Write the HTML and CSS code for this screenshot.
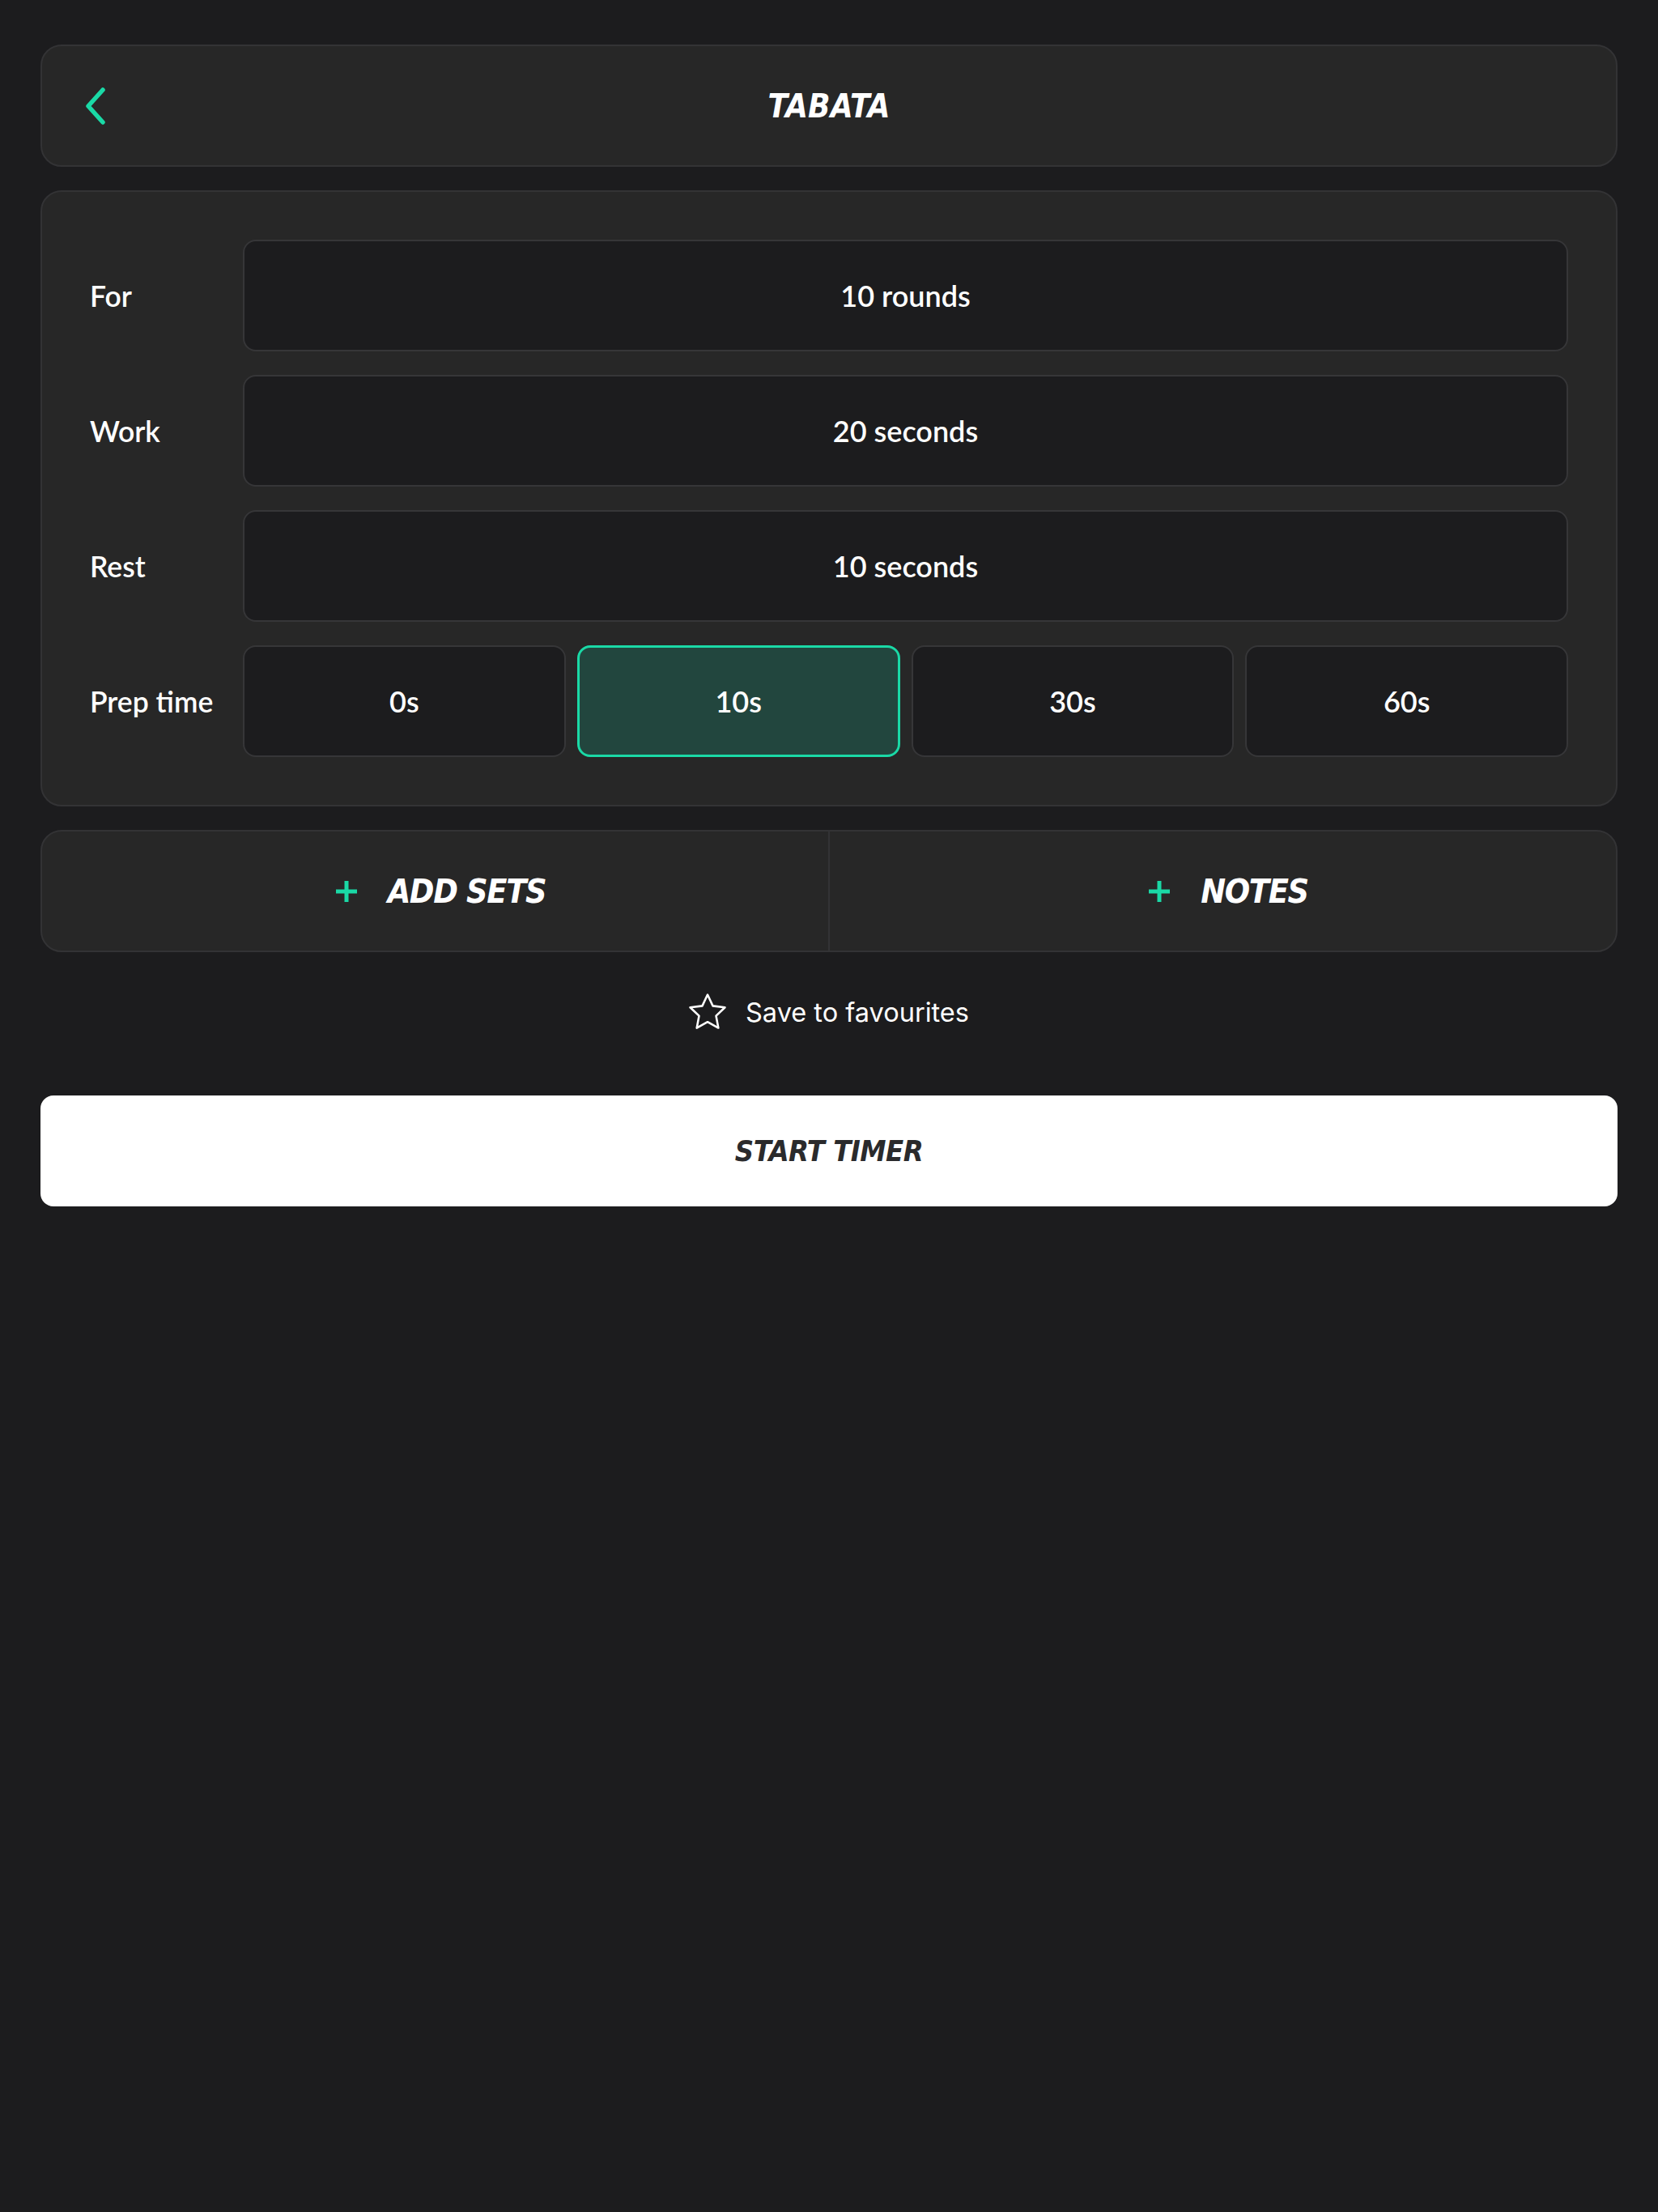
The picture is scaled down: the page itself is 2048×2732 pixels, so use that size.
FILE: index.html
```html
<!DOCTYPE html>
<html lang="en">
<head>
<meta charset="utf-8">
<title>Tabata</title>
<link rel="stylesheet" href="styles.css">
</head>
<body>
<div class="page">
  <header class="topbar">
    <div class="topbar-left">
      <svg class="back" viewBox="0 0 26 46" width="26" height="46" aria-hidden="true">
        <polyline points="22,3 4,23 22,43" fill="none" stroke="#1ad9a6" stroke-width="5.5" stroke-linecap="round" stroke-linejoin="round"/>
      </svg>
    </div>
    <h1 class="title">TABATA</h1>
    <div class="topbar-right"></div>
  </header>

  <section class="card settings">
    <div class="row">
      <div class="label">For</div>
      <div class="field">10 rounds</div>
    </div>
    <div class="row">
      <div class="label">Work</div>
      <div class="field">20 seconds</div>
    </div>
    <div class="row">
      <div class="label">Rest</div>
      <div class="field">10 seconds</div>
    </div>
    <div class="row">
      <div class="label">Prep time</div>
      <div class="options">
        <div class="field">0s</div>
        <div class="field selected">10s</div>
        <div class="field">30s</div>
        <div class="field">60s</div>
      </div>
    </div>
  </section>

  <section class="card actions">
    <div class="action">
      <svg class="plus" viewBox="0 0 26 26" width="26" height="26" aria-hidden="true">
        <rect x="10.5" y="0" width="5" height="26" fill="#1ad9a6"/>
        <rect x="0" y="10.5" width="26" height="5" fill="#1ad9a6"/>
      </svg>
      <span class="action-text">ADD SETS</span>
    </div>
    <div class="divider"></div>
    <div class="action">
      <svg class="plus" viewBox="0 0 26 26" width="26" height="26" aria-hidden="true">
        <rect x="10.5" y="0" width="5" height="26" fill="#1ad9a6"/>
        <rect x="0" y="10.5" width="26" height="5" fill="#1ad9a6"/>
      </svg>
      <span class="action-text">NOTES</span>
    </div>
  </section>

  <div class="favourite">
    <svg class="star" viewBox="1.6 1.5 20.8 20.8" width="46" height="46" aria-hidden="true">
      <path d="M12 2.2l2.95 6.25 6.75.85-4.95 4.7 1.28 6.75L12 17.4l-6.03 3.35 1.28-6.75L2.3 9.3l6.75-.85z" fill="none" stroke="#ffffff" stroke-width="1.15" stroke-linejoin="round"/>
    </svg>
    <span class="favourite-text">Save to favourites</span>
  </div>

  <button class="start">START TIMER</button>
</div>
</body>
</html>
```

FILE: styles.css
```css
* {
  box-sizing: border-box;
}

html, body {
  margin: 0;
  padding: 0;
  background: #1c1c1e;
}

body {
  min-height: 2732px;
  color: #ffffff;
  font-family: "Lato", "Inter", "Noto Sans", sans-serif;
}

.page {
  padding: 55px 50px 0 50px;
  display: flex;
  flex-direction: column;
}

.card {
  background: #272727;
  border: 2px solid #333335;
  border-radius: 26px;
}

.topbar {
  height: 151px;
  display: grid;
  grid-template-columns: 1fr auto 1fr;
  align-items: center;
  background: #272727;
  border: 2px solid #333335;
  border-radius: 26px;
}

.topbar-left {
  padding-left: 53px;
  display: flex;
  align-items: center;
}

.back {
  display: block;
}

.title,
.action-text,
.start {
  font-family: "Liberation Sans Narrow", "DejaVu Sans Condensed", "Roboto", sans-serif;
  font-weight: 700;
  font-style: italic;
}

.title {
  margin: 0;
  font-size: 40px;
  letter-spacing: 0.2px;
  color: #ffffff;
}

.settings {
  margin-top: 29px;
  padding: 59px;
  display: flex;
  flex-direction: column;
  gap: 29px;
}

.row {
  display: grid;
  grid-template-columns: 189px 1fr;
  align-items: center;
  height: 138px;
}

.label {
  font-size: 35.5px;
  font-weight: 600;
  color: #ffffff;
}

.field {
  height: 138px;
  display: flex;
  align-items: center;
  justify-content: center;
  background: #1c1c1e;
  border: 2px solid #363638;
  border-radius: 16px;
  font-size: 36px;
  font-weight: 600;
  color: #ffffff;
}

.options {
  display: grid;
  grid-template-columns: repeat(4, 1fr);
  gap: 14px;
}

.field.selected {
  background: #22463e;
  border: 3px solid #1ad9a6;
}

.actions {
  margin-top: 29px;
  height: 151px;
  display: flex;
  align-items: stretch;
}

.action {
  flex: 1;
  display: flex;
  align-items: center;
  justify-content: center;
  gap: 38px;
  padding-left: 14px;
}

.divider {
  width: 2px;
  background: #333335;
}

.plus {
  display: block;
}

.action-text {
  font-size: 41px;
  letter-spacing: -1.3px;
  color: #ffffff;
}

.favourite {
  margin: 51px 0 80px;
  height: 46px;
  display: flex;
  align-items: center;
  justify-content: center;
  gap: 24px;
}

.star {
  display: block;
}

.favourite-text {
  font-family: "Inter", "Noto Sans", sans-serif;
  font-size: 32.5px;
  font-weight: 400;
  color: #ffffff;
}

.start {
  height: 137px;
  border: none;
  border-radius: 16px;
  background: #ffffff;
  color: #2a2a2c;
  font-size: 36px;
  letter-spacing: -0.5px;
  cursor: pointer;
}
```
